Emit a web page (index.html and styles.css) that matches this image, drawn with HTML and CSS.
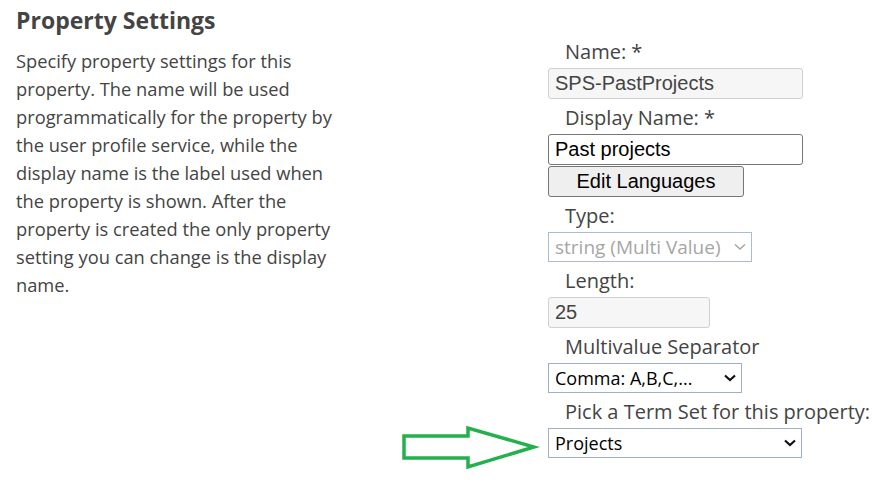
FILE: index.html
```html
<!DOCTYPE html>
<html lang="en">
<head>
    <meta charset="UTF-8">
    <title>Property Settings</title>
    <link rel="stylesheet" href="styles.css">
</head>
<body>
    <div class="page">
        <div class="intro">
            <h2>Property Settings</h2>
            <p>Specify property settings for this property. The name will be used programmatically for the property by the user profile service, while the display name is the label used when the property is shown. After the property is created the only property setting you can change is the display name.</p>
        </div>

        <div class="fields">
            <label class="field-label">Name: *</label>
            <input type="text" class="text-box locked name-box" value="SPS-PastProjects" disabled>

            <label class="field-label">Display Name: *</label>
            <input type="text" class="text-box name-box" value="Past projects">
            <button class="lang-btn">Edit Languages</button>

            <label class="field-label">Type:</label>
            <div class="select-wrap type-wrap">
                <select class="drop" disabled>
                    <option>string (Multi Value)</option>
                </select>
                <svg class="chevron" width="12" height="8" viewBox="0 0 12 8"><path d="M1 1.5 L6 6 L11 1.5" fill="none" stroke="#a6a6a6" stroke-width="1.6"/></svg>
            </div>

            <label class="field-label">Length:</label>
            <input type="text" class="text-box locked length-box" value="25" disabled>

            <label class="field-label">Multivalue Separator</label>
            <div class="select-wrap sep-wrap">
                <select class="drop">
                    <option>Comma: A,B,C,...</option>
                    <option>Semicolon: A;B;C;...</option>
                </select>
                <svg class="chevron" width="12" height="8" viewBox="0 0 12 8"><path d="M1 1.5 L6 6 L11 1.5" fill="none" stroke="#111" stroke-width="2.2"/></svg>
            </div>

            <label class="field-label">Pick a Term Set for this property:</label>
            <div class="select-wrap term-wrap">
                <select class="drop">
                    <option>Projects</option>
                </select>
                <svg class="chevron" width="12" height="8" viewBox="0 0 12 8"><path d="M1 1.5 L6 6 L11 1.5" fill="none" stroke="#111" stroke-width="2.2"/></svg>
            </div>
        </div>

        <svg class="pointer" width="140" height="48" viewBox="0 0 140 48">
            <path d="M4 11 L68 11 L68 3 L134 22 L68 42 L68 33 L4 33 Z" fill="none" stroke="#22b14c" stroke-width="3.5" stroke-linejoin="miter"/>
        </svg>
    </div>
</body>
</html>
```

FILE: styles.css
```css
body {
    margin: 0;
    padding: 0;
    background-color: #fff;
    font-family: "Open Sans", "Noto Sans", sans-serif;
    color: #444;
}

.page {
    position: relative;
    display: flex;
    align-items: flex-start;
    width: 890px;
    height: 481px;
}

.intro {
    flex: none;
    width: 325px;
    padding-left: 16px;
}

.intro h2 {
    margin: 5px 0 0;
    font-size: 23px;
    font-weight: 700;
    line-height: 30px;
    color: #444;
}

.intro p {
    margin: 12px 0 0;
    font-size: 18.3px;
    line-height: 28px;
}

.fields {
    display: flex;
    flex-direction: column;
    align-items: flex-start;
    margin-left: 207px;
    padding-top: 33px;
}

.field-label {
    display: block;
    height: 35px;
    padding-left: 17px;
    font-size: 20px;
    line-height: 37px;
    white-space: nowrap;
    color: #444;
}

.text-box {
    box-sizing: border-box;
    height: 31px;
    margin: 0;
    padding: 0 6px;
    font-family: "Liberation Sans", Arial, sans-serif;
    font-size: 20px;
    color: #000;
    background: #fff;
    border: 1px solid #767676;
    border-radius: 3px;
}

.text-box.locked {
    background: #f6f6f6;
    border-color: #d0d0d0;
    color: #444;
}

.name-box {
    width: 255px;
}

.length-box {
    width: 162px;
}

.lang-btn {
    box-sizing: border-box;
    width: 196px;
    height: 31px;
    margin: 1px 0 0;
    font-family: "Liberation Sans", Arial, sans-serif;
    font-size: 20px;
    color: #000;
    background: #efefef;
    border: 1px solid #767676;
    border-radius: 3px;
}

.select-wrap {
    position: relative;
}

.drop {
    box-sizing: border-box;
    width: 100%;
    height: 30px;
    margin: 0;
    padding: 0 24px 0 6px;
    font-family: "Open Sans", "Noto Sans", sans-serif;
    font-size: 18px;
    color: #000;
    background: #fff;
    border: 1px solid #9fb0c4;
    border-radius: 0;
    appearance: none;
    -webkit-appearance: none;
}

.drop:disabled {
    color: #a6a6a6;
    border-color: #a9bdd2;
    font-size: 19px;
    opacity: 1;
}

.chevron {
    position: absolute;
    right: 6px;
    top: 11px;
    pointer-events: none;
}

.type-wrap {
    width: 204px;
}

.sep-wrap {
    width: 194px;
}

.term-wrap {
    width: 254px;
}

.pointer {
    position: absolute;
    left: 400px;
    top: 425px;
}
```
